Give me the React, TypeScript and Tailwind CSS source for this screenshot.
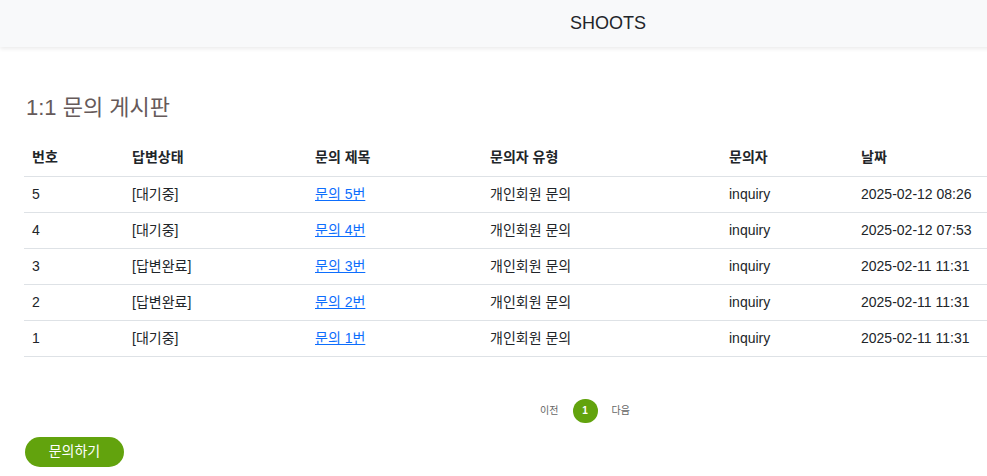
const rows = [
  { no: 5, status: "[대기중]", title: "문의 5번", type: "개인회원 문의", user: "inquiry", date: "2025-02-12 08:26" },
  { no: 4, status: "[대기중]", title: "문의 4번", type: "개인회원 문의", user: "inquiry", date: "2025-02-12 07:53" },
  { no: 3, status: "[답변완료]", title: "문의 3번", type: "개인회원 문의", user: "inquiry", date: "2025-02-11 11:31" },
  { no: 2, status: "[답변완료]", title: "문의 2번", type: "개인회원 문의", user: "inquiry", date: "2025-02-11 11:31" },
  { no: 1, status: "[대기중]", title: "문의 1번", type: "개인회원 문의", user: "inquiry", date: "2025-02-11 11:31" },
];

const font = { fontFamily: '"Liberation Sans", Arial, "Noto Sans CJK KR", sans-serif' };

export default function App() {
  return (
    <div className="w-[987px] h-[476px] overflow-hidden bg-white text-[#212529]" style={font}>
      <div className="w-[1216px]">
        {/* Header */}
        <header className="h-[47px] bg-[#f8f9fa] shadow-[0_2px_4px_rgba(0,0,0,0.08)] flex items-center justify-center">
          <span className="text-[18px]">SHOOTS</span>
        </header>

        <main className="px-6 pt-[48px]">
          <h2 className="text-[22px] leading-[26px] text-[#665a5a] ml-[2px]">1:1 문의 게시판</h2>

          <table className="mt-[19px] w-[1122px] text-[14px] border-collapse table-fixed">
            <colgroup>
              <col className="w-[100px]" />
              <col className="w-[183px]" />
              <col className="w-[175px]" />
              <col className="w-[239px]" />
              <col className="w-[132px]" />
              <col />
            </colgroup>
            <thead>
              <tr className="h-[36px] border-b border-[#dee2e6]">
                {["번호", "답변상태", "문의 제목", "문의자 유형", "문의자", "날짜"].map((h) => (
                  <th key={h} className="text-left font-bold px-2 align-middle">{h}</th>
                ))}
              </tr>
            </thead>
            <tbody>
              {rows.map((r) => (
                <tr key={r.no} className="h-[36px] border-b border-[#dee2e6]">
                  <td className="px-2">{r.no}</td>
                  <td className="px-2">{r.status}</td>
                  <td className="px-2">
                    <a href="#" className="text-[#0d6efd] underline">{r.title}</a>
                  </td>
                  <td className="px-2">{r.type}</td>
                  <td className="px-2">{r.user}</td>
                  <td className="px-2">{r.date}</td>
                </tr>
              ))}
            </tbody>
          </table>

          {/* Pagination */}
          <div className="w-[1122px] flex items-center justify-center gap-[14px] mt-[42px] text-[10px] text-[#666]">
            <span>이전</span>
            <span className="w-[25px] h-[24px] rounded-full bg-[#62a30d] text-white font-bold flex items-center justify-center">1</span>
            <span>다음</span>
          </div>

          <button className="mt-[14px] ml-px w-[99px] h-[30px] rounded-full bg-[#62a30d] text-white text-[14px]">
            문의하기
          </button>
        </main>
      </div>
    </div>
  );
}
